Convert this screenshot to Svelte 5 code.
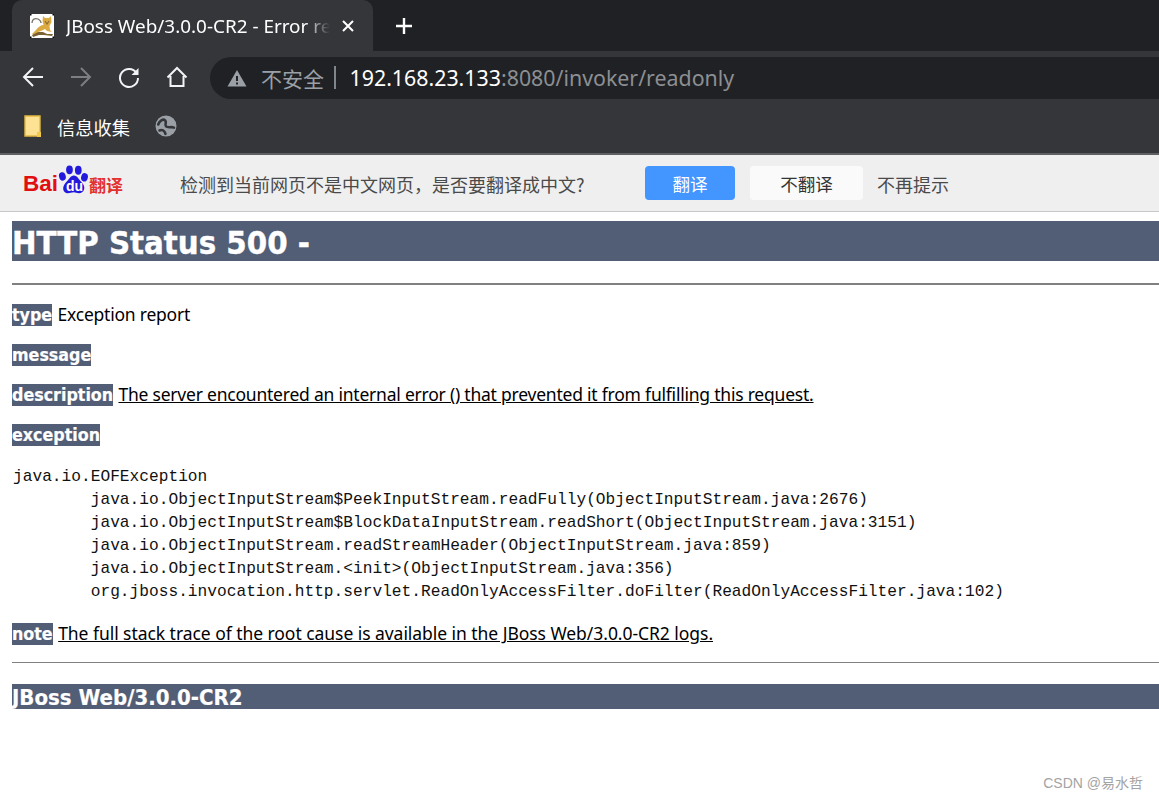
<script>
  const frames = [
    { a: 'java.io.ObjectInputStream$PeekInputStream.readFully(ObjectInputStream.java:2676)' },
    { a: 'java.io.ObjectInputStream$BlockDataInputStream.readShort(ObjectInputStream.java:3151)' },
    { a: 'java.io.ObjectInputStream.readStreamHeader(ObjectInputStream.java:859)' },
    { a: 'java.io.ObjectInputStream.<init>(ObjectInputStream.java:356)' },
    { a: 'org.jboss.invocation.http.servlet.ReadOnlyAccessFilter.doFilter(ReadOnlyAccessFilter.java:102)' }
  ];
</script>

<div class="browser">
  <div class="tabstrip">
    <div class="tab">
      <svg class="favicon" viewBox="0 0 24 24" width="24" height="24">
        <rect width="24" height="24" fill="#fff" />
        <path d="M2 9 C2 5 5 4 8 5 C10 6 11 7 11 9" stroke="#77736a" stroke-width="1.3" fill="none" />
        <path d="M13 2 L15 4 L19 4 L21 2 L21.5 8 L19.5 12 L20 16 L22 18 L17 17 L15 15 L11 17 L8 18 L4 21 L2 20 L6 16 C8 13 11 11 13.5 11 L12.5 7 Z" fill="#dcaa42" />
        <path d="M15 7 L17 10 L19 7" stroke="#8a6d33" stroke-width="1.2" fill="none" />
        <path d="M2 21 L8 18 L13 18 L17 20 L23 20 L22 22 L14 21 L9 21 L3 23 Z" fill="#7a6232" />
        <rect x="0" y="0" width="1.5" height="1.5" fill="#000" /><rect x="22.5" y="0" width="1.5" height="1.5" fill="#000" />
        <rect x="0" y="22.5" width="1.5" height="1.5" fill="#000" /><rect x="22.5" y="22.5" width="1.5" height="1.5" fill="#000" />
      </svg>
      <span class="tab-title">JBoss Web/3.0.0-CR2 - Error re</span>
      <svg class="tab-close" viewBox="0 0 14 14" width="14" height="14"><path d="M2 2 L12 12 M12 2 L2 12" stroke="#fff" stroke-width="2" /></svg>
    </div>
    <svg class="new-tab" viewBox="0 0 18 18" width="18" height="18"><path d="M9 1 V17 M1 9 H17" stroke="#fff" stroke-width="2.4" /></svg>
  </div>

  <div class="toolbar">
    <svg class="nav" viewBox="0 0 24 24" width="24" height="24"><path d="M22 12 H3 M12 3 L3 12 L12 21" stroke="#f1f3f4" stroke-width="2" fill="none" /></svg>
    <svg class="nav" viewBox="0 0 24 24" width="24" height="24"><path d="M2 12 H21 M12 3 L21 12 L12 21" stroke="#7d7e80" stroke-width="2" fill="none" /></svg>
    <svg class="nav" viewBox="0 0 24 24" width="24" height="24"><path d="M19.5 8 A9 9 0 1 0 21 13" stroke="#f1f3f4" stroke-width="2" fill="none" /><path d="M21.5 3 V10 H14.5 Z" fill="#f1f3f4" /></svg>
    <svg class="nav" viewBox="0 0 24 24" width="24" height="24"><path d="M2.5 12.5 L12 3 L21.5 12.5 M5.5 11 V21 H18.5 V11" stroke="#f1f3f4" stroke-width="2" fill="none" /></svg>
    <div class="omnibox">
      <svg class="warn" viewBox="0 0 20 18" width="20" height="18"><path d="M10 1 L19.5 17.5 H0.5 Z" fill="#9aa0a6" /><path d="M9 7 H11 V12 H9 Z M9 13.5 H11 V15.5 H9 Z" fill="#202124" /></svg>
      <span class="insecure">不安全</span>
      <span class="sep"></span>
      <span class="url"><span class="host">192.168.23.133</span>:8080/invoker/readonly</span>
    </div>
  </div>

  <div class="bookmarks">
    <svg class="folder" viewBox="0 0 18 22" width="18" height="22"><path d="M1 1 H16 V21 H1 Z" fill="#fde293" stroke="#e3b93f" stroke-width="1.4" /><path d="M13 17 H17 V22 H13 Z" fill="#f2c94c" /></svg>
    <span class="bm-label">信息收集</span>
    <svg class="globe" viewBox="0 0 22 22" width="22" height="22">
      <circle cx="11" cy="11" r="10.5" fill="#9aa0a6" />
      <path d="M3.2 9.5 C4.5 5.5 8 3.6 10.2 5.4 C12.2 7.2 9.2 9.4 11 11.4 C13 13.2 16 11.4 19 12.6 M4.5 15.5 C7 14.2 9.5 15.2 10.5 18.8" stroke="#35363a" stroke-width="2.6" fill="none" stroke-linecap="round" />
    </svg>
  </div>
  <div class="chrome-line"></div>
</div>

<div class="infobar">
  <div class="logo">
    <span class="bai">Bai</span>
    <span class="paw">
      <svg viewBox="0 0 34 33" width="30" height="31">
        <ellipse cx="13" cy="5.5" rx="3.8" ry="5" fill="#2319dc" />
        <ellipse cx="23" cy="6" rx="3.8" ry="5" fill="#2319dc" />
        <ellipse cx="5" cy="13" rx="3.8" ry="4.8" fill="#2319dc" transform="rotate(-15 5 13)" />
        <ellipse cx="30" cy="14" rx="3.8" ry="4.8" fill="#2319dc" transform="rotate(15 30 14)" />
        <path d="M18 12 C22 12 24 17 28 21 C32 26 29 32 24 32 C21 32 20 31 18 31 C15 31 14 32 11 32 C6 32 4 26 8 21 C12 17 14 12 18 12 Z" fill="#2319dc" />
      </svg>
      <span class="du">du</span>
    </span>
    <span class="fy">翻译</span>
  </div>
  <span class="prompt">检测到当前网页不是中文网页，是否要翻译成中文?</span>
  <button class="btn primary">翻译</button>
  <button class="btn plain">不翻译</button>
  <span class="never">不再提示</span>
</div>

<main class="page">
  <h1>HTTP Status 500 - </h1>
  <hr class="thick" />
  <p><b>type</b> Exception report</p>
  <p><b>message</b> <u></u></p>
  <p><b>description</b> <u>The server encountered an internal error () that prevented it from fulfilling this request.</u></p>
  <p><b>exception</b></p>
  <pre>java.io.EOFException
{#each frames as f}	{f.a}
{/each}</pre>
  <p class="note"><b>note</b> <u>The full stack trace of the root cause is available in the JBoss Web/3.0.0-CR2 logs.</u></p>
  <hr class="thin" />
  <h3>JBoss Web/3.0.0-CR2</h3>
</main>

<div class="watermark">CSDN @易水哲</div>

<style>
  :global(body) {
    margin: 0;
    background: #fff;
    overflow: hidden;
  }
  .browser {
    font-family: "Noto Sans", "Noto Sans CJK SC", sans-serif;
    background: #35363a;
    color: #fff;
  }
  .tabstrip {
    height: 51px;
    background: #202124;
    display: flex;
    align-items: flex-start;
    padding-left: 12px;
  }
  .tab {
    width: 361px;
    height: 51px;
    box-sizing: border-box;
    background: #35363a;
    border-radius: 10px 10px 0 0;
    display: flex;
    align-items: center;
    padding: 0 18px 0 18px;
  }
  .favicon { flex: none; margin-top: 1px; }
  .tab-title {
    flex: 1;
    margin-left: 12px;
    font-size: 18.9px;
    white-space: nowrap;
    overflow: hidden;
    -webkit-mask-image: linear-gradient(to right, #000 238px, transparent 264px);
    mask-image: linear-gradient(to right, #000 238px, transparent 264px);
  }
  .tab-close { flex: none; margin-left: 4px; margin-right: 0; }
  .new-tab { margin: 17px 0 0 22px; }
  .toolbar {
    height: 51px;
    display: flex;
    align-items: center;
    padding-left: 21px;
  }
  .nav { margin-right: 24px; flex: none; }
  .omnibox {
    margin: 2px 0 0 -3px;
    flex: 1;
    height: 42px;
    background: #202124;
    border-radius: 21px 0 0 21px;
    display: flex;
    align-items: center;
    padding-left: 17px;
    font-size: 21.35px;
  }
  .warn { flex: none; }
  .insecure { margin-left: 14px; color: #9aa0a6; font-size: 21px; }
  .sep { width: 1.5px; height: 23px; background: #80868b; margin: 0 14px 0 10px; }
  .url { color: #8c8f93; }
  .host { color: #fff; }
  .bookmarks {
    height: 51px;
    box-sizing: border-box;
    padding-bottom: 3px;
    display: flex;
    align-items: center;
    padding-left: 24px;
  }
  .folder { flex: none; }
  .bm-label { margin-left: 15px; font-size: 18.3px; margin-top: 1px; }
  .globe { margin-left: 25px; flex: none; }
  .chrome-line { height: 2px; background: #5f6063; }

  .infobar {
    height: 57px;
    box-sizing: border-box;
    background: #efefef;
    border-bottom: 1px solid #c8c8c8;
    display: flex;
    align-items: center;
    font-family: "Noto Sans CJK SC", sans-serif;
    color: #4a4a4a;
    padding-left: 23px;
  }
  .logo { width: 157px; display: flex; align-items: flex-end; height: 31px; margin-top: -7px; flex: none; }
  .bai { font: bold 22.5px/22px "Liberation Sans", sans-serif; color: #e10f0f; width: 35px; flex: none; }
  .paw { position: relative; width: 30px; height: 31px; flex: none; }
  .paw svg { display: block; }
  .du { position: absolute; left: 8px; top: 15px; font: bold 14px/14px "Liberation Sans", sans-serif; color: #fff; }
  .fy { font-size: 17px; line-height: 20px; font-weight: 700; color: #e2312f; margin-left: 1px; white-space: nowrap; }
  .prompt { font-size: 18px; white-space: nowrap; width: 465px; flex: none; margin-top: 2px; }
  .btn {
    font: 17.5px "Noto Sans CJK SC", sans-serif;
    border: 0;
    border-radius: 4px;
    height: 34px;
    padding: 0;
    margin-top: 0;
    flex: none;
  }
  .primary { width: 90px; background: #4395ff; color: #fff; }
  .plain { width: 113px; margin-left: 15px; background: #fafafa; color: #333; }
  .never { margin-left: 14px; font-size: 18px; margin-top: 1px; }

  .page {
    padding: 9px 0 0 12px;
    font-family: "Noto Sans", sans-serif;
    color: #000;
  }
  h1, h3, b {
    font-family: "DejaVu Sans Condensed", "DejaVu Sans", sans-serif;
    font-weight: 700;
    background: #525d76;
    color: #fff;
  }
  h1 { margin: 0; height: 40px; font-size: 32.6px; line-height: 44px; -webkit-text-stroke: 0.4px #fff; }
  hr { border: 0; margin: 0; background: #808080; }
  .thick { height: 2px; margin-top: 22px; margin-bottom: 18px; }
  p { margin: 0 0 18px; height: 22px; font-size: 17.5px; letter-spacing: -0.22px; line-height: 22px; white-space: nowrap; }
  b { font-size: 17.7px; letter-spacing: 0; display: inline-block; height: 22px; line-height: 22px; margin-right: 1px; -webkit-text-stroke: 0.2px #fff; }
  pre {
    margin: 21px 0 18px;
    padding-left: 1px;
    font: 16.2px/23px "Liberation Mono", monospace;
    tab-size: 8;
    color: #111;
  }
  .note { margin-bottom: 18px; letter-spacing: -0.05px; }
  .thin { height: 1px; margin-bottom: 21px; }
  h3 { margin: 0; height: 25px; font-size: 22px; line-height: 27px; -webkit-text-stroke: 0.2px #fff; }
  .watermark {
    position: absolute;
    right: 16px;
    top: 772px;
    font: 14px "Liberation Sans", "Noto Sans CJK SC", sans-serif;
    color: #a3a3a3;
  }
</style>
